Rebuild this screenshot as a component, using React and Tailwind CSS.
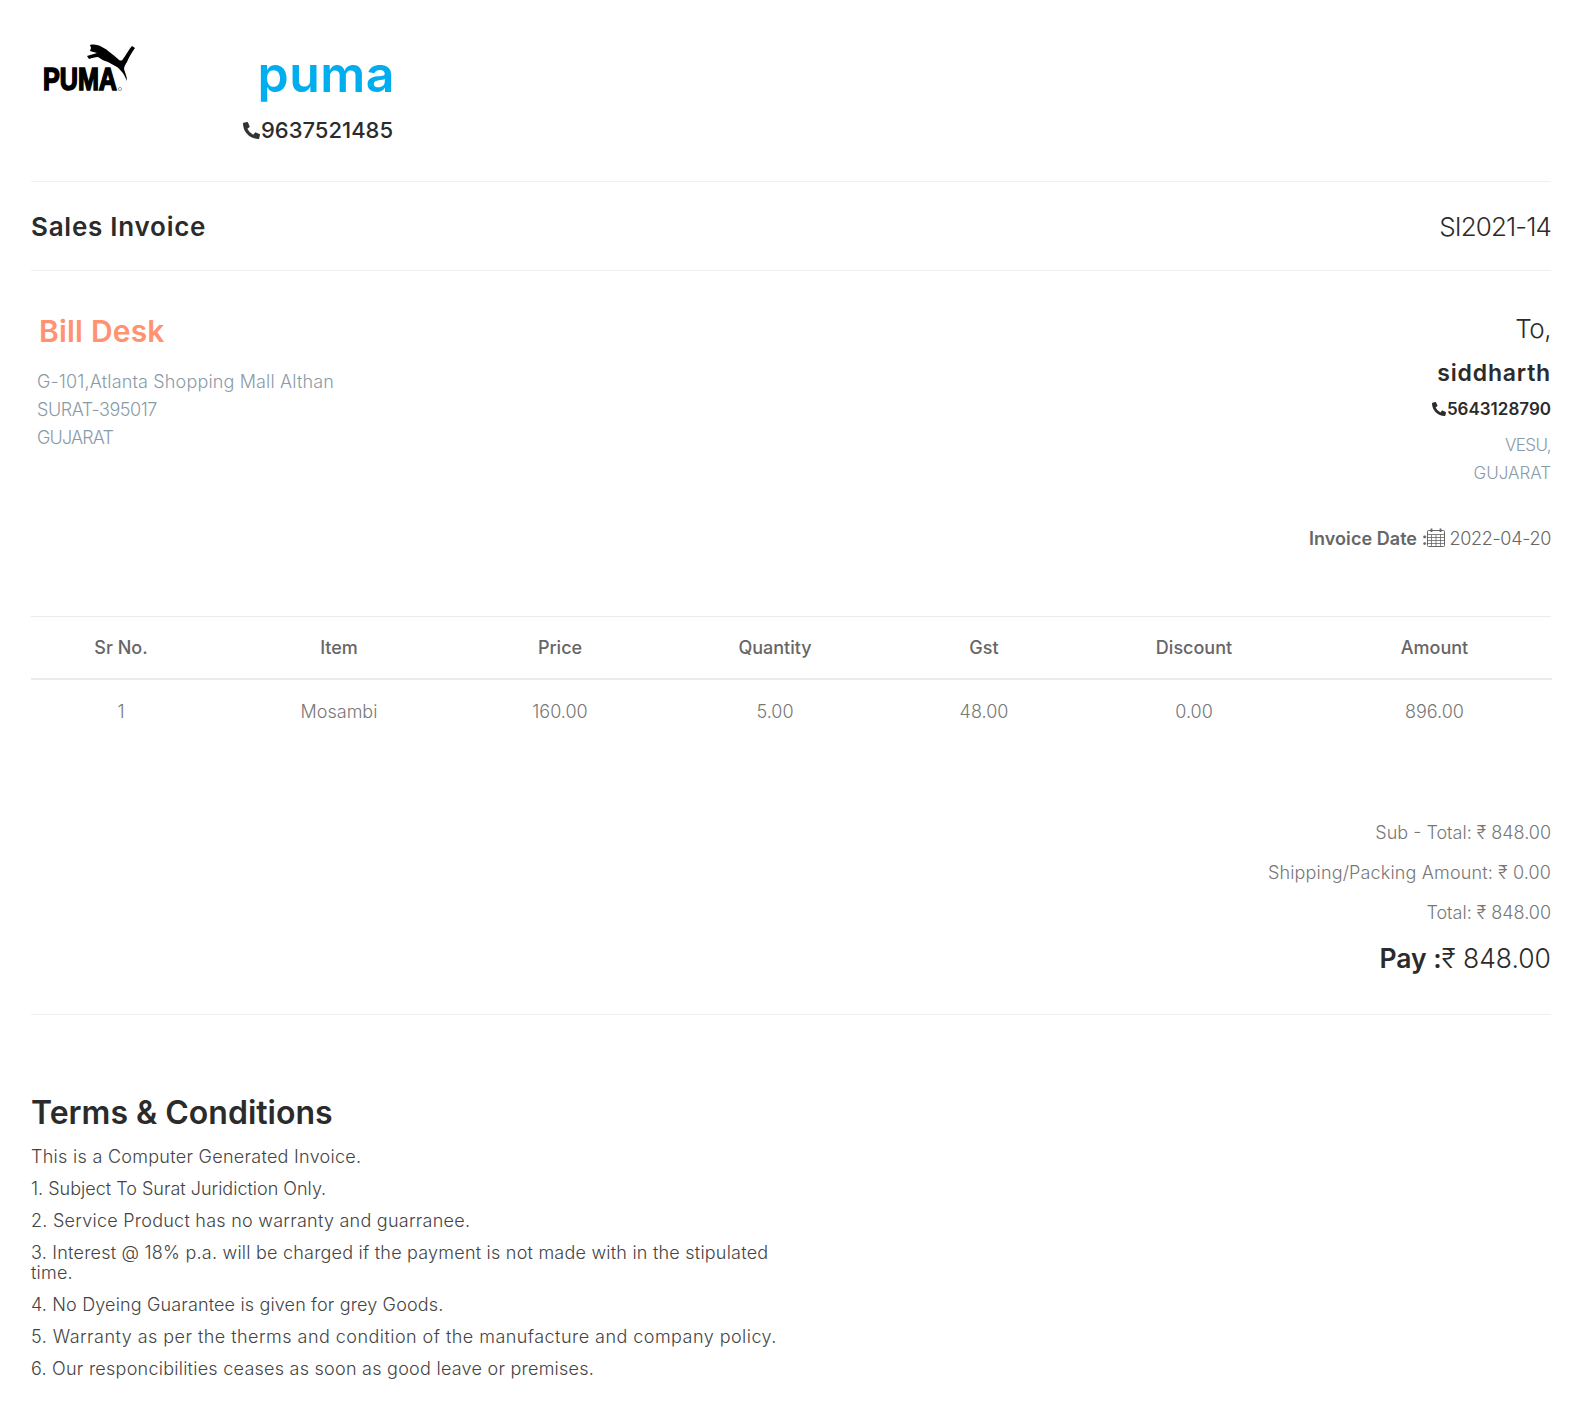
import React from 'react';
import { FaPhoneAlt } from 'react-icons/fa';

const columns = [
    { name: 'Sr No.', value: '1', width: 'w-[180px]' },
    { name: 'Item', value: 'Mosambi', width: 'w-[256px]' },
    { name: 'Price', value: '160.00', width: 'w-[186px]' },
    { name: 'Quantity', value: '5.00', width: 'w-[244px]' },
    { name: 'Gst', value: '48.00', width: 'w-[174px]' },
    { name: 'Discount', value: '0.00', width: 'w-[246px]' },
    { name: 'Amount', value: '896.00', width: 'w-[235px]' },
];

const terms = [
    { text: 'This is a Computer Generated Invoice.', tracking: 'tracking-[0.28px]' },
    { text: '1. Subject To Surat Juridiction Only.', tracking: 'tracking-[0px]' },
    { text: '2. Service Product has no warranty and guarranee.', tracking: 'tracking-[0.25px]' },
    { text: '3. Interest @ 18% p.a. will be charged if the payment is not made with in the stipulated time.', tracking: 'tracking-[0.22px]' },
    { text: '4. No Dyeing Guarantee is given for grey Goods.', tracking: 'tracking-[0.15px]' },
    { text: '5. Warranty as per the therms and condition of the manufacture and company policy.', tracking: 'tracking-[0.46px]' },
    { text: '6. Our responcibilities ceases as soon as good leave or premises.', tracking: 'tracking-[0.25px]' },
];

function PumaLogo() {
    return (
        <svg width="96" height="52" viewBox="0 0 96 52" className="block">
            <path
                d="M48 1 C52 0 57 1 60 3 C66 6 71 11 76 15 C78 17 80 17 81 15 C84 11 87 5 90 2 L93 4 C90 8 87 13 85 18 C83 21 82 23 82 25 C83 29 85 32 85 37 C83 33 82 30 80 28 C78 26 77 24 75 23 C72 21 69 20 66 18 C62 17 59 15 56 13 C53 13 50 14 47 15 L45 12 C48 11 52 10 55 9 C53 8 50 8 48 7 L49 4 Z"
                fill="#000"
            />
            <text x="1" y="45.5" fontFamily="Liberation Sans, sans-serif" fontWeight="700" fontSize="31" textLength="74" lengthAdjust="spacingAndGlyphs" fill="#000" stroke="#000" strokeWidth="1.6">PUMA</text>
            <circle cx="78" cy="45" r="1.6" fill="none" stroke="#777" strokeWidth="0.7" />
        </svg>
    );
}

function CalendarIcon() {
    return (
        <svg width="18" height="19" viewBox="0 0 18 19" fill="none" stroke="#666" strokeWidth="1" className="inline-block align-[-2px]">
            <rect x="0.5" y="2.5" width="17" height="16" rx="1" />
            <path d="M0.5 6.5H17.5M0.5 9.5H17.5M0.5 12.5H17.5M0.5 15.5H17.5M4.5 6.5V18.5M9 6.5V18.5M13.5 6.5V18.5" strokeWidth="0.8" />
            <path d="M4.5 0.5V4M13.5 0.5V4" strokeWidth="1.8" />
        </svg>
    );
}

function App() {
    return (
        <div className="min-h-[1421px] bg-white px-[31px] font-['Inter',sans-serif] text-[#2b2b2b]">
            <header className="flex h-[182px] items-start border-b border-[#f0f0f0]">
                <div className="ml-[11px] mt-[44px] w-[201px]">
                    <PumaLogo />
                </div>
                <div className="mt-[43px] flex flex-col items-end">
                    <h1 className="mr-[-2px] text-[50px] leading-[62px] font-semibold tracking-[0.5px] text-[#00aeef]">puma</h1>
                    <div className="mt-[10px] flex items-center text-[22px] leading-[30px] font-medium">
                        <FaPhoneAlt className="size-[17px] text-[#333]" />
                        <span className="ml-px">9637521485</span>
                    </div>
                </div>
            </header>

            <div className="flex h-[89px] items-center justify-between border-b border-[#f0f0f0]">
                <h2 className="text-[26px] font-semibold tracking-[0.75px]">Sales Invoice</h2>
                <span className="text-[26px] font-light tracking-[-0.9px]">SI2021-14</span>
            </div>

            <section className="flex h-[346px] justify-between border-b border-[#e9ecef]">
                <div className="pl-[6px] pt-[39px]">
                    <h3 className="pl-[2px] text-[30px] leading-[42px] font-semibold tracking-[0.2px] text-[#ff9270]">Bill Desk</h3>
                    <div className="mt-[16px] text-[18px] leading-[28px] font-light text-[#8a9ba8]">
                        <p className="tracking-[0.15px]">G-101,Atlanta Shopping Mall Althan</p>
                        <p className="tracking-[-0.45px]">SURAT-395017</p>
                        <p className="tracking-[-0.85px]">GUJARAT</p>
                    </div>
                </div>
                <div className="pt-[42px] text-right">
                    <p className="text-[26px] leading-[32px] font-light tracking-[-0.5px]">To,</p>
                    <p className="mt-[12px] text-[23px] leading-[32px] font-semibold tracking-[0.8px]">siddharth</p>
                    <p className="mt-[7px] flex items-center justify-end text-[17px] leading-[26px] font-semibold">
                        <FaPhoneAlt className="size-[14px]" />
                        <span className="ml-px">5643128790</span>
                    </p>
                    <div className="mt-[9px] text-[17px] leading-[28px] font-light text-[#8a9ba8]">
                        <p className="tracking-[-0.6px]">VESU,</p>
                        <p>GUJARAT</p>
                    </div>
                    <p className="mt-[38px] text-[18px] leading-[28px] text-[#666]">
                        <span className="font-semibold tracking-[0.05px]">Invoice Date :</span>
                        <CalendarIcon />
                        <span className="ml-[4px] font-light tracking-[-0.3px]">2022-04-20</span>
                    </p>
                </div>
            </section>

            <table className="w-full table-fixed border-collapse text-center text-[18px]">
                <thead>
                    <tr className="h-[62px] border-b-2 border-[#e9ecef]">
                        {columns.map(col => (
                            <th key={col.name} className={`${col.width} font-medium text-[#666]`}>{col.name}</th>
                        ))}
                    </tr>
                </thead>
                <tbody>
                    <tr className="h-[64px]">
                        {columns.map(col => (
                            <td key={col.name} className="font-light text-[#777]">{col.value}</td>
                        ))}
                    </tr>
                </tbody>
            </table>

            <section className="mt-[70px] flex h-[202px] flex-col items-end border-b border-[#f0f0f0] text-right text-[#777]">
                <p className="text-[18px] leading-[40px] font-light">Sub - Total: ₹ 848.00</p>
                <p className="text-[18px] leading-[40px] font-light tracking-[0.15px]">Shipping/Packing Amount: ₹ 0.00</p>
                <p className="text-[18px] leading-[40px] font-light">Total: ₹ 848.00</p>
                <p className="mt-[3px] text-[26.5px] leading-[44px] font-light text-[#2b2b2b]">
                    <span className="font-semibold">Pay :</span>₹ 848.00
                </p>
            </section>

            <section className="mt-[76px] w-[760px]">
                <h4 className="text-[32px] leading-[44px] font-semibold">Terms &amp; Conditions</h4>
                <div className="mt-[12px] text-[18px] leading-[20px] font-light text-[#444]">
                    {terms.map(term => (
                        <p key={term.text} className={`mb-[12px] ${term.tracking}`}>{term.text}</p>
                    ))}
                </div>
            </section>
        </div>
    );
}

export default App;
